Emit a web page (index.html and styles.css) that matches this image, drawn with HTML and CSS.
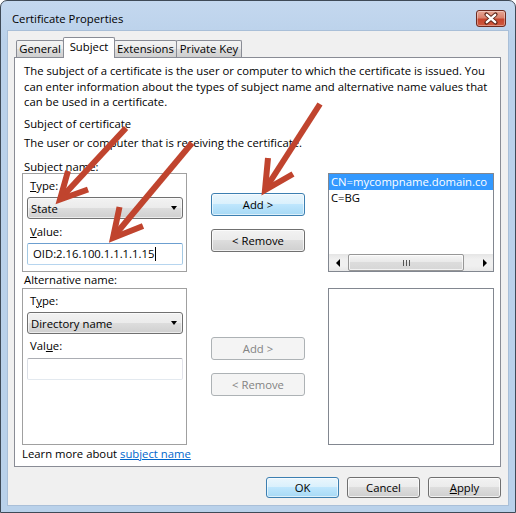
FILE: index.html
```html
<!DOCTYPE html>
<html>
<head>
<meta charset="utf-8">
<title>Certificate Properties</title>
<link rel="stylesheet" href="styles.css">
</head>
<body>
<div class="window">
  <div class="titlebar">
    <span class="title">Certificate Properties</span>
    <div class="close">
      <svg width="30" height="17" viewBox="0 0 30 17">
        <path d="M10.5 4.5 L19.5 12.5 M19.5 4.5 L10.5 12.5" stroke="#5a2418" stroke-width="4.2" stroke-linecap="round" fill="none"/>
        <path d="M10.8 4.8 L19.2 12.2 M19.2 4.8 L10.8 12.2" stroke="#ffffff" stroke-width="2.4" stroke-linecap="round" fill="none"/>
      </svg>
    </div>
  </div>
  <div class="client">
    <div class="tabs">
      <div class="tab t-general">General</div>
      <div class="tab t-subject active">Subject</div>
      <div class="tab t-ext">Extensions</div>
      <div class="tab t-key">Private Key</div>
    </div>
    <div class="panel">
      <p class="intro">The subject of a certificate is the user or computer to which the certificate is issued. You<br>can enter information about the types of subject name and alternative name values that<br>can be used in a certificate.</p>
      <p class="heading">Subject of certificate</p>
      <p class="sub">The user or computer that is receiving the certificate.</p>
      <div class="grid">
        <div class="lbl lbl1">Subject name:</div>
        <div class="box box1">
          <div class="flabel"><u>T</u>ype:</div>
          <div class="combo"><span>State</span><i class="caret"></i></div>
          <div class="flabel flabel-v1"><u>V</u>alue:</div>
          <div class="input focused">OID:2.16.100.1.1.1.1.15<span class="cursor"></span></div>
        </div>
        <div class="btns btns1">
          <button class="btn default">Add &gt;</button>
          <button class="btn">&lt; Remove</button>
        </div>
        <div class="list list1">
          <div class="rows">
            <div class="row sel">CN=mycompname.domain.co</div>
            <div class="row">C=BG</div>
          </div>
          <div class="hscroll">
            <div class="sarrow"><i class="tri-left"></i></div>
            <div class="thumb"><span class="grip"></span></div>
            <div class="track"></div>
            <div class="sarrow"><i class="tri-right"></i></div>
          </div>
        </div>
        <div class="lbl lbl2">Alternative name:</div>
        <div class="box box2">
          <div class="flabel">T<u>y</u>pe:</div>
          <div class="combo"><span>Directory name</span><i class="caret"></i></div>
          <div class="flabel flabel-v2">Val<u>u</u>e:</div>
          <div class="input"></div>
        </div>
        <div class="btns btns2">
          <button class="btn" disabled>Add &gt;</button>
          <button class="btn" disabled>&lt; Remove</button>
        </div>
        <div class="list list2"></div>
      </div>
      <div class="learn">Learn more about <a href="#">subject name</a></div>
    </div>
    <div class="footer">
      <button class="btn fbtn default">OK</button>
      <button class="btn fbtn">Cancel</button>
      <button class="btn fbtn"><u>A</u>pply</button>
    </div>
  </div>
  <svg class="arrows" width="516" height="513" viewBox="0 0 516 513">
    <g stroke="#c0442e" stroke-width="6" fill="none" stroke-linejoin="miter" stroke-miterlimit="10">
      <line x1="126" y1="128" x2="62" y2="197"/>
      <polyline points="68,171 60,199.5 88,189.5"/>
      <line x1="192" y1="143" x2="115" y2="235"/>
      <polyline points="119.5,207 113,238 143,226"/>
      <line x1="320" y1="104" x2="266" y2="188"/>
      <polyline points="268,158 265,190 293,174"/>
    </g>
  </svg>
</div>
</body>
</html>
```

FILE: styles.css
```css
* { box-sizing: border-box; }
html, body { margin: 0; padding: 0; background: #ffffff; }
body {
  font-family: "Open Sans", "Noto Sans", sans-serif;
  font-size: 11.3px;
  color: #000;
}
p { margin: 0; }

.window {
  position: relative;
  width: 516px;
  height: 513px;
  border: 1px solid #3f4a57;
  border-radius: 7px 7px 0 0;
  background: linear-gradient(#c4d8ef, #bad1ea 40px, #b9d1ea);
  padding: 0 7px 7px;
  display: flex;
  flex-direction: column;
}

.titlebar {
  height: 30px;
  display: flex;
  justify-content: space-between;
  align-items: flex-start;
}
.title {
  margin: 10px 0 0 4px;
  line-height: 16px;
  font-size: 11.3px;
  color: #000;
}
.close {
  margin: 9px 2px 0 0;
  width: 30px;
  height: 17px;
  border: 1px solid #6e2a1f;
  border-radius: 3px;
  background: linear-gradient(#e8a795 0%, #d9826e 45%, #c6452d 55%, #cf5a40 100%);
  box-shadow: inset 0 0 0 1px rgba(255,255,255,0.35);
  overflow: hidden;
}
.close svg { display: block; margin: -1px 0 0 -1px; }

.client {
  flex: 1;
  background: #f0f0f0;
  padding: 6px 7px 0 6px;
  display: flex;
  flex-direction: column;
  box-shadow: 0 0 0 1px #a9bfd8;
}

.tabs {
  display: flex;
  align-items: flex-end;
  height: 20px;
  padding-left: 2px;
}
.tab {
  height: 17px;
  border: 1px solid #898c95;
  border-bottom: none;
  border-radius: 2px 2px 0 0;
  background: linear-gradient(#f3f3f3, #ebebeb 50%, #dddddd 50%, #cfcfcf);
  margin-left: -1px;
  text-align: center;
  line-height: 15px;
  white-space: nowrap;
}
.t-general { width: 48px; margin-left: 0; }
.t-subject { width: 52px; }
.t-ext { width: 63px; }
.t-key { width: 66px; }
.tab.active {
  height: 21px;
  margin-bottom: -1px;
  background: #ffffff;
  position: relative;
  z-index: 1;
  line-height: 18px;
}

.panel {
  height: 410px;
  border: 1px solid #898c95;
  background: #ffffff;
  padding: 5px 0 0 7px;
}
.intro {
  padding-left: 2px;
  line-height: 15.5px;
  white-space: nowrap;
}
.heading {
  margin-top: 6px;
  padding-left: 2px;
  line-height: 15px;
}
.sub {
  margin-top: 4px;
  padding-left: 2px;
  line-height: 15px;
  white-space: nowrap;
}

.grid {
  margin-top: 10.5px;
  display: grid;
  grid-template-columns: 165px 141px 166px;
  grid-template-rows: 13px 99px 16px 157px;
}
.lbl {
  grid-column: 1 / 4;
  padding-left: 2px;
  white-space: nowrap;
}
.lbl1 { line-height: 13px; }
.lbl2 { line-height: 16px; }

.box {
  border: 1px solid #a0a0a0;
  padding: 4px 0 0 4px;
}
.flabel {
  line-height: 16px;
  padding-left: 3px;
}
.flabel-v1 { margin-top: 5px; }
.flabel-v2 { margin-top: 4px; }

.combo {
  margin-top: 3px;
  width: 156px;
  height: 22px;
  border: 1px solid #707070;
  border-radius: 3px;
  background: linear-gradient(#f2f2f2, #ebebeb 50%, #dddddd 50%, #cfcfcf);
  box-shadow: inset 0 0 0 1px rgba(255,255,255,0.6);
  display: flex;
  align-items: center;
  padding-left: 3px;
  white-space: nowrap;
}
.caret {
  margin-left: auto;
  margin-right: 5px;
  width: 0;
  height: 0;
  border-left: 3.5px solid transparent;
  border-right: 3.5px solid transparent;
  border-top: 4px solid #000;
}

.input {
  width: 156px;
  height: 22px;
  border: 1px solid;
  border-color: #abadb3 #e2e3ea #e3e9ef #dbdfe6;
  border-radius: 2px;
  background: #fff;
  padding-left: 5px;
  line-height: 20px;
  display: flex;
  align-items: center;
  white-space: nowrap;
}
.box1 .input { margin-top: 3px; }
.box2 .input { margin-top: 4px; }
.input.focused { border-color: #6c9fd0 #a4c9e3 #b6d5ef #a4c9e3; }
.cursor {
  display: inline-block;
  width: 1px;
  height: 14px;
  background: #000;
  margin-left: 1px;
}

.btns {
  padding-left: 24px;
  display: flex;
  flex-direction: column;
  gap: 13px;
}
.btns1 { padding-top: 20px; }
.btns2 { padding-top: 49px; }

.btn {
  font: inherit;
  color: #000;
  width: 94px;
  height: 23px;
  padding: 0;
  border: 1px solid #707070;
  border-radius: 3px;
  background: linear-gradient(#f2f2f2, #ebebeb 50%, #dddddd 50%, #cfcfcf);
  box-shadow: inset 0 0 0 1px rgba(255,255,255,0.7);
  text-align: center;
  line-height: 20px;
}
.btn.default {
  border-color: #3c7fb1;
  background: linear-gradient(#eaf6fd, #d9f0fc 50%, #bee6fd 50%, #a7d9f5);
  box-shadow: inset 0 0 0 1px rgba(255,255,255,0.6);
}
.btn:disabled {
  border-color: #adb2b5;
  background: #f4f4f4;
  color: #838383;
  box-shadow: none;
}

.list {
  border: 1px solid #828790;
  background: #fff;
  display: flex;
  flex-direction: column;
}
.rows { flex: 1; overflow: hidden; }
.row {
  height: 16px;
  line-height: 16px;
  padding-left: 2px;
  white-space: nowrap;
  overflow: hidden;
}
.row.sel { background: #3399ff; color: #fff; }

.hscroll {
  height: 17px;
  display: flex;
  background: linear-gradient(#e5e5e5, #f0f0f0 30%, #f0f0f0 70%, #e8e8e8);
}
.sarrow {
  width: 17px;
  height: 17px;
  display: flex;
  align-items: center;
  justify-content: center;
}
.tri-left {
  width: 0; height: 0;
  border-top: 4px solid transparent;
  border-bottom: 4px solid transparent;
  border-right: 4px solid #000;
}
.tri-right {
  width: 0; height: 0;
  border-top: 4px solid transparent;
  border-bottom: 4px solid transparent;
  border-left: 4px solid #000;
}
.thumb {
  margin-left: 2px;
  width: 116px;
  height: 17px;
  border: 1px solid #979797;
  border-radius: 2px;
  background: linear-gradient(#f5f5f5, #e8e8e8 50%, #dcdcdc 50%, #d6d6d6);
  box-shadow: inset 0 0 0 1px rgba(255,255,255,0.7);
  display: flex;
  align-items: center;
  justify-content: center;
}
.grip {
  width: 7px;
  height: 6px;
  background: repeating-linear-gradient(to right, #555 0 1px, transparent 1px 3px);
}
.track { flex: 1; }

.learn {
  margin-top: 1px;
  line-height: 16px;
  white-space: nowrap;
}
.learn a { color: #0066cc; text-decoration: underline; }

.footer {
  margin-top: 10px;
  height: 21px;
  display: flex;
  justify-content: flex-end;
  gap: 8px;
}
.fbtn {
  width: 73px;
  height: 21px;
  line-height: 18px;
}

.arrows {
  position: absolute;
  top: -1px;
  left: -1px;
  pointer-events: none;
}
```
